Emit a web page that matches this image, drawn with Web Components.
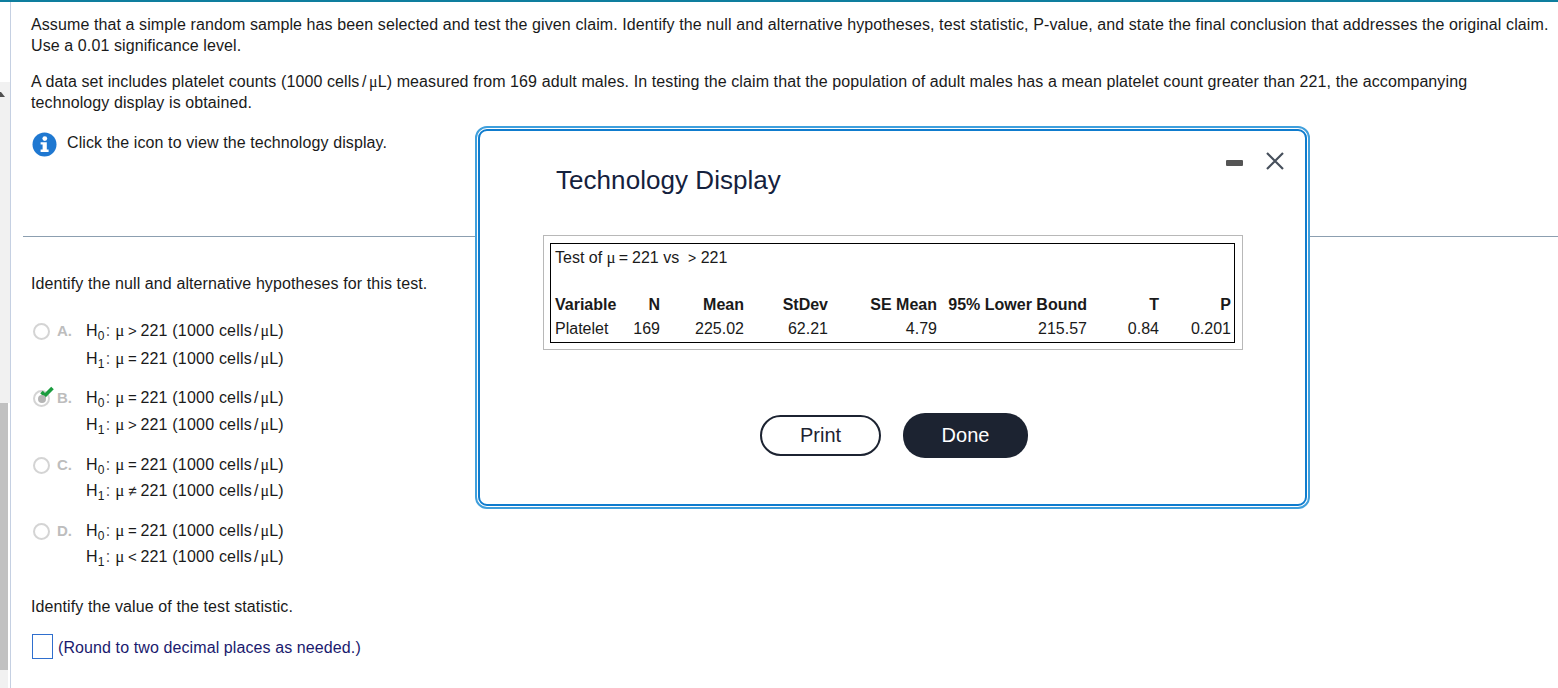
<!DOCTYPE html>
<html>
<head>
<meta charset="utf-8">
<title>Technology Display</title>
<style>
html, body { margin: 0; padding: 0; height: 100%; background: #fff; overflow: hidden; }
body { font-family: "Liberation Sans", Arial, sans-serif; font-size: 16px; color: #1a1a1a; }
</style>
</head>
<body>
<question-page></question-page>

<script>
// small helper, every component has the same shadow setup
function shadow(el, html) {
    el.attachShadow({ mode: 'open' });
    el.shadowRoot.innerHTML = html;
}

class SideStrip extends HTMLElement {
    constructor() {
        super();
        shadow(this, `
            <style>
                :host { display: flex; flex-direction: column; width: 10px; flex: none; box-sizing: content-box; border-right: 1px solid #c5d0e2; height: 100%; }
                .top { height: 80px; background: #fff; flex: none; }
                .track { flex: none; height: 321px; background: #f1f1f1; }
                .track svg { display: block; }
                .thumb { flex: none; width: 8px; height: 267px; background: #c1c1c1; }
                .rest { flex: 1; width: 8px; background: #f1f1f1; }
            </style>
            <div class="top"></div>
            <div class="track">
                <svg width="10" height="16" viewBox="0 0 10 16"><path d="M0 15 L0 10 L1 10 L5 15 Z" fill="#505050"/></svg>
            </div>
            <div class="thumb"></div>
            <div class="rest"></div>
        `);
    }
}

class InfoIcon extends HTMLElement {
    constructor() {
        super();
        shadow(this, `
            <style>:host { display: block; width: 25px; height: 25px; flex: none; } svg { display: block; }</style>
            <svg width="25" height="25" viewBox="0 0 25 25">
                <circle cx="12.5" cy="12.5" r="12" fill="#1f78d1"/>
                <circle cx="12.8" cy="6.6" r="2.4" fill="#fff"/>
                <path d="M8.6 10.2 H14.8 V17.6 H16.6 V20 H8.6 V17.6 H10.6 V12.6 H8.6 Z" fill="#fff"/>
            </svg>
        `);
    }
}

// one "H0: mu > 221 (1000 cells/uL)" line
class HypLine extends HTMLElement {
    constructor() {
        super();
        const sub = this.getAttribute('sub');
        const op = this.getAttribute('op');
        shadow(this, `
            <style>
                :host { display: flex; align-items: baseline; white-space: nowrap; color: #1a1a1a; height: 21px; }
                .h { font-size: 16px; letter-spacing: 0.2px; }
                sub { font-size: 12px; line-height: 0; vertical-align: -4px; }
                .colon { margin: 0 5px 0 1px; color: #555; }
                .mu { font-family: "Liberation Serif", serif; font-size: 17px; }
                .op { width: 16px; text-align: center; font-size: 15px; }
                .val { letter-spacing: 0.2px; }
                .slash { margin: 0 2px; }
                .mu2 { font-family: "Liberation Serif", serif; font-size: 16px; }
            </style>
            <span class="h">H<sub>${sub}</sub></span><span class="colon">:</span><span class="mu">μ</span><span class="op">${op}</span><span class="val">221 (1000 cells</span><span class="slash">/</span><span class="mu2">μ</span><span>L)</span>
        `);
    }
}

class AnswerOption extends HTMLElement {
    constructor() {
        super();
        const checked = this.hasAttribute('checked');
        shadow(this, `
            <style>
                :host { display: grid; grid-template-columns: 26px 29px auto; align-items: start; height: var(--h, 66px); }
                .radio { position: relative; width: 17px; height: 17px; border-radius: 50%; border: 2px solid #d4d4d4; box-sizing: border-box; margin: 6px 0 0 2px; background: #fff; }
                .radio.on::after { content: ""; position: absolute; left: 2.5px; top: 2.5px; width: 8px; height: 8px; border-radius: 50%; background: #b5b5b5; }
                .check { position: absolute; left: 5px; top: -6px; }
                .letter { font-weight: bold; font-size: 15px; color: #bdbdbd; line-height: 21px; padding-top: 3px; letter-spacing: 0; }
                .lines { display: flex; flex-direction: column; gap: var(--gap, 7px); line-height: 21px; padding-top: 3px; }
            </style>
            <div class="radio ${checked ? 'on' : ''}">
                ${checked ? `<svg class="check" width="14" height="12" viewBox="0 0 14 12"><path d="M1.5 6 L5 9.5 L12.5 2" fill="none" stroke="#1a9c3e" stroke-width="3.6"/></svg>` : ''}
            </div>
            <div class="letter"><slot name="letter"></slot></div>
            <div class="lines"><slot></slot></div>
        `);
    }
}

class PillButton extends HTMLElement {
    constructor() {
        super();
        shadow(this, `
            <style>
                :host { display: inline-block; }
                button { font: 20px "Liberation Sans", Arial, sans-serif; border-radius: 22px; cursor: pointer; padding: 0; display: block; }
                :host([kind="outline"]) button { width: 121px; height: 41px; background: #fff; color: #1c2331; border: 2px solid #1c2331; }
                :host([kind="solid"]) button { width: 125px; height: 45px; background: #1c2331; color: #fff; border: none; }
            </style>
            <button><slot></slot></button>
        `);
    }
}

class StatTable extends HTMLElement {
    constructor() {
        super();
        shadow(this, `
            <style>
                :host { display: block; border: 1px solid #b8b8b8; padding: 7px 7px 6px 6px; width: 700px; height: 115px; box-sizing: border-box; color: #1a1a1a; font-size: 16px; }
                .inner { border: 1px solid #000; height: 100%; box-sizing: border-box; padding: 2px 3px 0 4px; }
                .title { height: 47px; line-height: 24px; white-space: nowrap; }
                .mu { font-family: "Liberation Serif", serif; font-size: 17px; }
                .gt { font-size: 14px; }
                .eq { margin: 0 4px 0 3px; }
                .grid { display: grid; grid-template-columns: 65px 40px 84px 84px 109px 150px 72px 72px; line-height: 24px; text-align: right; white-space: nowrap; }
                .grid b:first-child, .grid .first { text-align: left; }
            </style>
            <div class="inner">
                <div class="title">Test of <span class="mu">μ</span><span class="eq">=</span>221 vs &nbsp;<span class="gt">&gt;</span> 221</div>
                <div class="grid">
                    <b>Variable</b><b>N</b><b>Mean</b><b>StDev</b><b>SE Mean</b><b>95% Lower Bound</b><b>T</b><b>P</b>
                    <span class="first">Platelet</span><span>169</span><span>225.02</span><span>62.21</span><span>4.79</span><span>215.57</span><span>0.84</span><span>0.201</span>
                </div>
            </div>
        `);
    }
}

class TechModal extends HTMLElement {
    constructor() {
        super();
        shadow(this, `
            <style>
                :host { position: absolute; left: 475px; top: 124px; width: 835px; height: 383px; box-sizing: border-box; border: 2px solid #3f9fdc; border-radius: 12px; padding: 1px; background: #fff; color: #14213d; letter-spacing: normal; }
                .frame { height: 100%; box-sizing: border-box; border: 2px solid #0f7cce; border-radius: 9px; position: relative; padding: 32px 64px 0 63px; display: flex; flex-direction: column; }
                h2 { margin: 0 0 0 13px; font-weight: normal; font-size: 26px; line-height: 34px; height: 72px; color: #14213d; letter-spacing: 0.05px; }
                .controls { position: absolute; right: 21px; top: 21px; display: flex; align-items: flex-start; gap: 22px; }
                .controls svg { display: block; }
                .minus { margin-top: 7px; }
                .buttons { display: flex; align-items: center; gap: 22px; margin-top: 63px; padding-left: 217px; }
            </style>
            <div class="frame">
                <div class="controls">
                    <svg class="minus" width="18" height="8" viewBox="0 0 18 8"><rect x="0" y="1" width="17" height="6" rx="1" fill="#555"/></svg>
                    <svg width="18" height="18" viewBox="0 0 18 18"><path d="M1 1 L17 17 M17 1 L1 17" stroke="#47505c" stroke-width="2.2" fill="none"/></svg>
                </div>
                <h2><slot name="title"></slot></h2>
                <slot></slot>
                <div class="buttons"><slot name="buttons"></slot></div>
            </div>
        `);
    }
}

class QuestionPage extends HTMLElement {
    constructor() {
        super();
        const hyp = (letter, a, b, style, extra) => `
            <answer-option style="${style}" ${extra || ''}>
                <span slot="letter">${letter}.</span>
                <hyp-line sub="0" op="${a}"></hyp-line>
                <hyp-line sub="1" op="${b}"></hyp-line>
            </answer-option>`;
        shadow(this, `
            <style>
                :host { display: flex; height: 688px; width: 1558px; position: relative; overflow: hidden; border-top: 2px solid #0e7e9e; box-sizing: border-box; font-family: "Liberation Sans", Arial, sans-serif; font-size: 16px; color: #1a1a1a; letter-spacing: 0.1px; }
                .main { flex: 1; min-width: 0; display: flex; flex-direction: column; }
                .top { padding: 12px 0 0 20px; line-height: 21px; height: 234px; box-sizing: border-box; }
                p { margin: 0; white-space: nowrap; }
                .gap { margin-top: 15px; }
                .mu { font-family: "Liberation Serif", serif; }
                .sl { margin: 0 2.5px; }
                .click { display: flex; gap: 10px; margin-top: 19px; margin-left: 1px; align-items: flex-start; }
                .click span { line-height: 21px; }
                hr { margin: 0 0 0 12px; border: 0; border-top: 1px solid #8c9fb0; height: 0; }
                .bottom { padding: 36px 0 0 20px; display: flex; flex-direction: column; line-height: 21px; }
                .options { margin-top: 23px; display: flex; flex-direction: column; }
                .round { display: flex; align-items: center; gap: 5px; margin-top: 17px; color: #1a1a6e; margin-left: 1px; }
                .round span { margin-top: 1px; }
                .box { width: 19px; height: 23px; border: 1px solid #2f6fce; background: #fff; flex: none; }
                .stat { margin-top: 13px; }
            </style>
            <side-strip></side-strip>
            <div class="main">
                <div class="top">
                    <p>Assume that a simple random sample has been selected and test the given claim. Identify the null and alternative hypotheses, test statistic, P-value, and state the final conclusion that addresses the original claim.</p>
                    <p>Use a 0.01 significance level.</p>
                    <p class="gap">A data set includes platelet counts (1000 cells<span class="sl">/</span><span class="mu">μ</span>L) measured from 169 adult males. In testing the claim that the population of adult males has a mean platelet count greater than 221, the accompanying</p>
                    <p>technology display is obtained.</p>
                    <div class="click"><info-icon></info-icon><span>Click the icon to view the technology display.</span></div>
                </div>
                <hr>
                <div class="bottom">
                    <p>Identify the null and alternative hypotheses for this test.</p>
                    <div class="options">
                        ${hyp('A', '&gt;', '=', '--h:67px')}
                        ${hyp('B', '=', '&gt;', '--h:67px;--gap:6px', 'checked')}
                        ${hyp('C', '=', '≠', '--h:66px;--gap:5px')}
                        ${hyp('D', '=', '&lt;', '--h:66px;--gap:5px')}
                    </div>
                    <p class="stat">Identify the value of the test statistic.</p>
                    <div class="round"><div class="box"></div><span>(Round to two decimal places as needed.)</span></div>
                </div>
            </div>
            <tech-modal>
                <span slot="title">Technology Display</span>
                <stat-table></stat-table>
                <pill-button slot="buttons" kind="outline">Print</pill-button>
                <pill-button slot="buttons" kind="solid">Done</pill-button>
            </tech-modal>
        `);
    }
}

customElements.define('side-strip', SideStrip);
customElements.define('info-icon', InfoIcon);
customElements.define('hyp-line', HypLine);
customElements.define('answer-option', AnswerOption);
customElements.define('pill-button', PillButton);
customElements.define('stat-table', StatTable);
customElements.define('tech-modal', TechModal);
customElements.define('question-page', QuestionPage);
</script>
</body>
</html>
